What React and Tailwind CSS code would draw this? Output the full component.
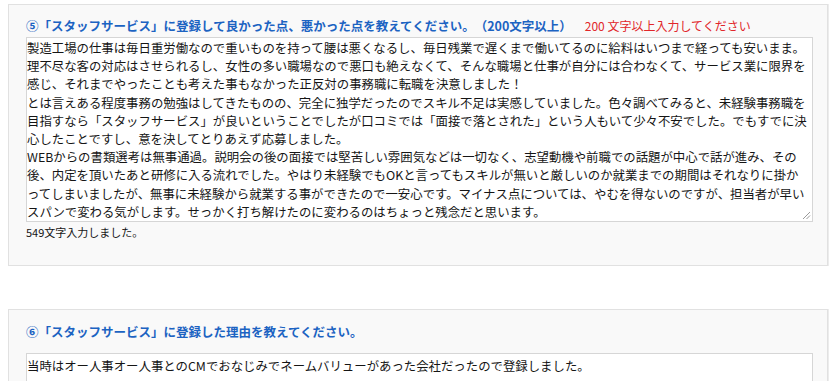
import React from "react";

const FONT = { fontFamily: '"Noto Sans CJK JP", "Noto Sans", sans-serif' };

const lines1 = [
  "製造工場の仕事は毎日重労働なので重いものを持って腰は悪くなるし、毎日残業で遅くまで働いてるのに給料はいつまで経っても安いまま。",
  "理不尽な客の対応はさせられるし、女性の多い職場なので悪口も絶えなくて、そんな職場と仕事が自分には合わなくて、サービス業に限界を",
  "感じ、それまでやったことも考えた事もなかった正反対の事務職に転職を決意しました！",
  "とは言えある程度事務の勉強はしてきたものの、完全に独学だったのでスキル不足は実感していました。色々調べてみると、未経験事務職を",
  "目指すなら「スタッフサービス」が良いということでしたが口コミでは「面接で落とされた」という人もいて少々不安でした。でもすでに決",
  "心したことですし、意を決してとりあえず応募しました。",
  "WEBからの書類選考は無事通過。説明会の後の面接では堅苦しい雰囲気などは一切なく、志望動機や前職での話題が中心で話が進み、その",
  "後、内定を頂いたあと研修に入る流れでした。やはり未経験でもOKと言ってもスキルが無いと厳しいのか就業までの期間はそれなりに掛か",
  "ってしまいましたが、無事に未経験から就業する事ができたので一安心です。マイナス点については、やむを得ないのですが、担当者が早い",
  "スパンで変わる気がします。せっかく打ち解けたのに変わるのはちょっと残念だと思います。",
];

function ResizeHandle() {
  return (
    <svg className="absolute right-[1px] bottom-[1px]" width="9" height="9" viewBox="0 0 9 9">
      <line x1="1" y1="8" x2="8" y2="1" stroke="#9a9a9a" strokeWidth="1" />
      <line x1="4.5" y1="8" x2="8" y2="4.5" stroke="#9a9a9a" strokeWidth="1" />
    </svg>
  );
}

export default function App() {
  return (
    <div className="w-[835px] h-[381px] overflow-hidden bg-white pt-[4px] pl-[8px] [text-spacing-trim:space-all]" style={FONT}>
      <section className="w-[820px] h-[262px] border border-[#e1e1e1] bg-[#f9f9f9] pl-[17px] pt-[12px] shadow-[1px_0_0_#ececec]">
        <div className="flex items-baseline mb-[2px] leading-[18px] whitespace-nowrap">
          <h3 className="text-[12.5px] font-bold text-[#1c63c2]">
            ⑤「スタッフサービス」に登録して良かった点、悪かった点を教えてください。（200文字以上）
          </h3>
          <span className="ml-[13px] text-[12px] text-[#e1262a]">200 文字以上入力してください</span>
        </div>
        <div className="relative w-[787px] h-[185px] border border-[#d6d6d6] bg-white pt-[1px] text-[12.4px] leading-[18.2px] text-[#151515]">
          {lines1.map((l, i) => (
            <div key={i} className="whitespace-nowrap">{l}</div>
          ))}
          <ResizeHandle />
        </div>
        <p className="mt-[3px] text-[11px] leading-[14px] text-[#151515]">549文字入力しました。</p>
      </section>

      <section className="mt-[43px] w-[820px] h-[120px] border border-[#e1e1e1] bg-[#f9f9f9] pl-[17px] pt-[13px] shadow-[1px_0_0_#ececec]">
        <h3 className="text-[12.5px] font-bold text-[#1c63c2] leading-[18px] mb-[12px] whitespace-nowrap">
          ⑥「スタッフサービス」に登録した理由を教えてください。
        </h3>
        <div className="w-[787px] h-[80px] border border-[#d6d6d6] bg-white pt-[3px] text-[12.4px] leading-[18.2px] text-[#151515]">
          <div className="whitespace-nowrap">当時はオー人事オー人事とのCMでおなじみでネームバリューがあった会社だったので登録しました。</div>
        </div>
      </section>
    </div>
  );
}
